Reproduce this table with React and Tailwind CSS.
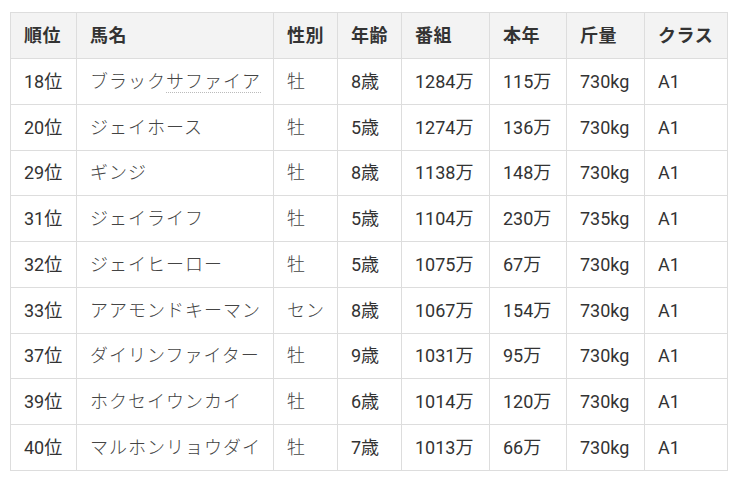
import React from 'react';

const rows = [
  ['18位', 'ブラックサファイア', '牡', '8歳', '1284万', '115万', '730kg', 'A1'],
  ['20位', 'ジェイホース', '牡', '5歳', '1274万', '136万', '730kg', 'A1'],
  ['29位', 'ギンジ', '牡', '8歳', '1138万', '148万', '730kg', 'A1'],
  ['31位', 'ジェイライフ', '牡', '5歳', '1104万', '230万', '735kg', 'A1'],
  ['32位', 'ジェイヒーロー', '牡', '5歳', '1075万', '67万', '730kg', 'A1'],
  ['33位', 'アアモンドキーマン', 'セン', '8歳', '1067万', '154万', '730kg', 'A1'],
  ['37位', 'ダイリンファイター', '牡', '9歳', '1031万', '95万', '730kg', 'A1'],
  ['39位', 'ホクセイウンカイ', '牡', '6歳', '1014万', '120万', '730kg', 'A1'],
  ['40位', 'マルホンリョウダイ', '牡', '7歳', '1013万', '66万', '730kg', 'A1'],
];

const headers = ['順位', '馬名', '性別', '年齢', '番組', '本年', '斤量', 'クラス'];
const widths = ['w-[66px]', 'w-[197px]', 'w-[64px]', 'w-[64px]', 'w-[88px]', 'w-[77px]', 'w-[78px]', 'w-[83px]'];

const App = () => {
  return (
    <div className="bg-white min-h-[478px] pt-[12px] pl-[10px] font-['Roboto','Noto_Sans_CJK_JP',sans-serif] text-[#333]">
      <table className="border-collapse table-fixed w-[717px] text-[18px]">
        <thead>
          <tr className="bg-[#f3f3f3]">
            {headers.map((h, i) => (
              <th
                key={h}
                className={`${widths[i]} h-[46px] border border-[#dddddd] px-[13px] text-left font-bold text-[#333] tracking-[0.5px]`}
              >
                {h}
              </th>
            ))}
          </tr>
        </thead>
        <tbody>
          {rows.map((r) => (
            <tr key={r[0]}>
              {r.map((c, i) => (
                <td
                  key={i}
                  className={`h-[45.75px] border border-[#dddddd] px-[13px] whitespace-nowrap ${
                    i === 1 ? 'tracking-[1px] text-[#444] font-light' : i === 2 ? 'text-[#444] font-light tracking-[1px]' : ''
                  }`}
                >
                  {c === 'ブラックサファイア' ? (
                    <>
                      ブラック
                      <span className="border-b border-dotted border-[#bbb]">サファイア</span>
                    </>
                  ) : (
                    c
                  )}
                </td>
              ))}
            </tr>
          ))}
        </tbody>
      </table>
    </div>
  );
};

export default App;
